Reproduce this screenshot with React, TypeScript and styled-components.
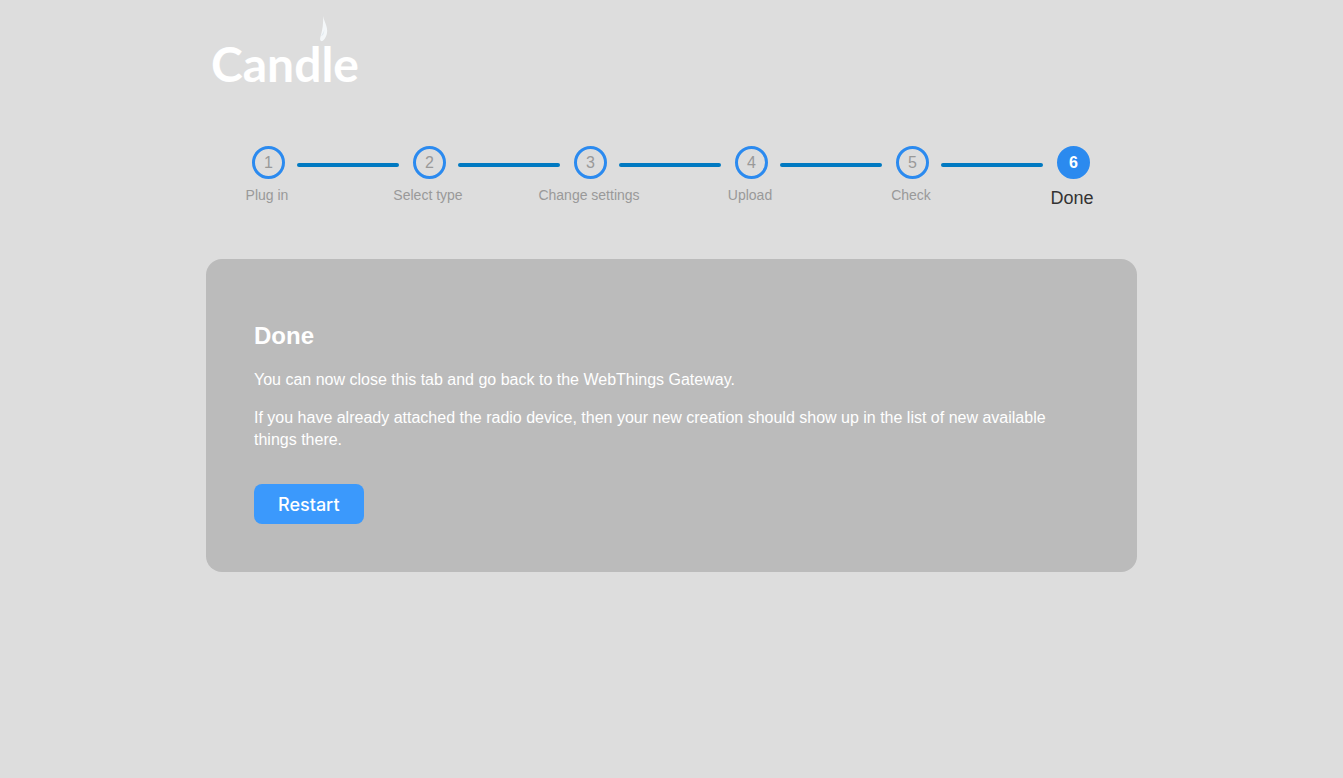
import React from "react";
import styled, { createGlobalStyle, css } from "styled-components";

const GlobalStyle = createGlobalStyle`
  *, *::before, *::after {
    box-sizing: border-box;
  }
  body {
    margin: 0;
    background: #ddd;
    color: #fff;
    font-family: "Liberation Sans", Arial, sans-serif;
    font-size: 16px;
    line-height: 22px;
  }
`;

const Page = styled.div`
  max-width: 963px;
  margin: 0 auto;
  padding: 16px;
`;

const Header = styled.header`
  padding-left: 4px;
`;

const Logo = styled.svg`
  display: block;
  width: 156px;
  height: 80px;
`;

const Steps = styled.ol`
  display: grid;
  grid-template-columns: repeat(6, 1fr);
  margin: 50px -16px 0 -19px;
  padding: 0;
  list-style: none;
`;

const Step = styled.li`
  display: flex;
  flex-direction: column;
`;

const StepHead = styled.div`
  display: flex;
  align-items: center;
`;

const Line = styled.span<{ $side: "before" | "after"; $hidden: boolean }>`
  flex: 1;
  height: 4px;
  margin-top: 5px;
  background: #0079c1;
  visibility: ${({ $hidden }) => ($hidden ? "hidden" : "visible")};
  ${({ $side }) =>
    $side === "before"
      ? css`
          margin-right: 14px;
          border-radius: 0 2px 2px 0;
        `
      : css`
          margin-left: 12px;
          border-radius: 2px 0 0 2px;
        `}
`;

const Circle = styled.span<{ $active: boolean }>`
  display: flex;
  align-items: center;
  justify-content: center;
  width: 33px;
  height: 33px;
  border: 3px solid #2b8aef;
  border-radius: 50%;
  background: ${({ $active }) => ($active ? "#2b8aef" : "transparent")};
  color: ${({ $active }) => ($active ? "#fff" : "#999")};
  font-weight: ${({ $active }) => ($active ? 700 : 400)};
`;

const StepLabel = styled.span<{ $active: boolean }>`
  padding: 5px 1px 0 0;
  text-align: center;
  color: ${({ $active }) => ($active ? "#333" : "#999")};
  font-size: ${({ $active }) => ($active ? "18px" : "14px")};
  line-height: ${({ $active }) => ($active ? "28px" : "22px")};
`;

const Card = styled.main`
  margin-top: 47px;
  padding: 60px 48px 48px;
  border-radius: 16px;
  background: #bbb;
`;

const Title = styled.h2`
  margin: 0;
  font-size: 24px;
  line-height: 34px;
`;

const Text = styled.p`
  margin: 16px 0 0;
`;

const Button = styled.button`
  display: block;
  height: 40px;
  margin-top: 33px;
  padding: 0 24px;
  border: 0;
  border-radius: 8px;
  background: #3b99fc;
  color: #fff;
  font-family: Inter, sans-serif;
  font-size: 18px;
  font-weight: 500;
  cursor: pointer;
`;

const labels = ["Plug in", "Select type", "Change settings", "Upload", "Check", "Done"];
const current = labels.length - 1;

export default function App() {
  return (
    <>
      <GlobalStyle />
      <Page>
        <Header>
          <Logo viewBox="0 0 156 80" role="img" aria-label="Candle">
            <text x="1" y="66" fill="#fff" fontFamily="Lato, sans-serif" fontSize="48" fontWeight="700">
              Candle
            </text>
            <path d="M113 0C114 5 118 11 117 17C116 22 113 26 111 25C108 23 114 16 113 0Z" fill="#f4f7f9" />
            <path d="M114 12C115 15 112 18 111 20C113 20 115 17 114 12Z" fill="#e2eaf0" />
          </Logo>
        </Header>
        <Steps>
          {labels.map((label, i) => (
            <Step key={label} aria-current={i === current ? "step" : undefined}>
              <StepHead>
                <Line $side="before" $hidden={i === 0} />
                <Circle $active={i === current}>{i + 1}</Circle>
                <Line $side="after" $hidden={i === current} />
              </StepHead>
              <StepLabel $active={i === current}>{label}</StepLabel>
            </Step>
          ))}
        </Steps>
        <Card>
          <Title>Done</Title>
          <Text>You can now close this tab and go back to the WebThings Gateway.</Text>
          <Text>
            If you have already attached the radio device, then your new creation should show up in the list of new
            available things there.
          </Text>
          <Button type="button">Restart</Button>
        </Card>
      </Page>
    </>
  );
}
